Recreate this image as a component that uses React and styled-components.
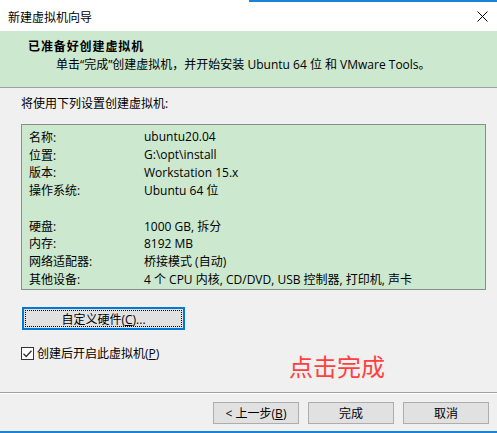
import styled, { createGlobalStyle } from 'styled-components';

const Global = createGlobalStyle`
    html, body {
        margin: 0;
        padding: 0;
        background: #f0f0f0;
    }
    body {
        font-family: "Open Sans", "Noto Sans CJK SC", sans-serif;
        font-size: 12px;
        color: #000;
    }
`;

const WINDOW = styled.div`
    position: relative;
    width: 497px;
    height: 433px;
    display: flex;
    flex-direction: column;
    background: #f0f0f0;
    overflow: hidden;
    box-sizing: border-box;
    border-bottom: 2px solid #1883d7;
`;

const TITLEBAR = styled.div`
    height: 31px;
    flex: none;
    display: flex;
    align-items: center;
    justify-content: space-between;
    padding: 2px 9px 0 8px;
    box-sizing: border-box;
    background: linear-gradient(to right, #fff 249px, #1883d7 249px) top / 100% 2px no-repeat,
        #fff;

    .title {
        font-family: "Noto Sans CJK SC", sans-serif;
        line-height: 16px;
    }
`;

const HEADER = styled.div`
    height: 57px;
    flex: none;
    box-sizing: border-box;
    background: #cce8cf;
    border-bottom: 1px solid #a0a0a0;
    padding: 8px 0 0 28px;

    .heading {
        font-weight: bold;
        line-height: 16px;
        letter-spacing: 0.9px;
    }

    .sub {
        margin: 2px 0 0 28px;
        line-height: 16px;
    }
`;

const BODY = styled.div`
    position: relative;
    flex: 1;
    padding: 0 11px 0 21px;
    border-bottom: 1px solid #a0a0a0;
    box-shadow: 0 1px 0 #fff;

    .intro {
        margin-top: 8px;
        line-height: 16px;
    }
`;

const SUMMARY = styled.div`
    margin-top: 12px;
    height: 166px;
    box-sizing: border-box;
    background: #cce8cf;
    border: 1px solid #82928a;
    padding: 3px 7px;
    display: grid;
    grid-template-columns: 115px 1fr;
    grid-auto-rows: 17.75px;
    align-items: center;
`;

const GAP = styled.div`
    grid-column: 1 / -1;
`;

const CUSTOM = styled.button`
    margin: 17px 0 0 1px;
    width: 163px;
    height: 23px;
    padding: 0;
    display: block;
    position: relative;
    font: inherit;
    background: #e1e1e1;
    border: 2px solid #0078d7;
    box-sizing: border-box;

    &::after {
        content: '';
        position: absolute;
        inset: 1px;
        border: 1px dotted #000;
    }
`;

const CHECKROW = styled.label`
    margin-top: 17px;
    display: flex;
    align-items: center;
    gap: 3px;
    height: 13px;
    line-height: 16px;
`;

const BOX = styled.span`
    width: 13px;
    height: 13px;
    box-sizing: border-box;
    border: 1px solid #333;
    background: #fff;
    display: flex;
    align-items: center;
    justify-content: center;
`;

const NOTE = styled.div`
    position: absolute;
    left: 289px;
    top: 266px;
    font-family: "Noto Sans CJK SC", sans-serif;
    font-size: 24px;
    line-height: 24px;
    color: #ff4040;
`;

const FOOTER = styled.div`
    height: 38px;
    flex: none;
    display: flex;
    justify-content: flex-end;
    gap: 9px;
    padding: 9px 8px 0 0;
    box-sizing: border-box;
`;

const BTN = styled.button`
    width: 86px;
    height: 22px;
    padding: 0;
    font: inherit;
    background: #e1e1e1;
    border: 1px solid #adadad;
    box-sizing: border-box;
`;

const rows = [
    ['名称:', 'ubuntu20.04'],
    ['位置:', 'G:\\opt\\install'],
    ['版本:', 'Workstation 15.x'],
    ['操作系统:', 'Ubuntu 64 位'],
    null,
    ['硬盘:', '1000 GB, 拆分'],
    ['内存:', '8192 MB'],
    ['网络适配器:', '桥接模式 (自动)'],
    ['其他设备:', '4 个 CPU 内核, CD/DVD, USB 控制器, 打印机, 声卡'],
];

const App = () => {
    return (
        <WINDOW>
            <Global />
            <TITLEBAR>
                <span className="title">新建虚拟机向导</span>
                <svg width="11" height="11" viewBox="0 0 11 11">
                    <path d="M0.5 0.5L10.5 10.5M10.5 0.5L0.5 10.5" stroke="#000" strokeWidth="1" />
                </svg>
            </TITLEBAR>

            <HEADER>
                <div className="heading">已准备好创建虚拟机</div>
                <div className="sub">
                    单击“完成”创建虚拟机，并开始安装 Ubuntu 64 位 和 VMware Tools。
                </div>
            </HEADER>

            <BODY>
                <div className="intro">将使用下列设置创建虚拟机:</div>
                <SUMMARY>
                    {rows.map((r, i) =>
                        r ? (
                            [<span key={i + 'l'}>{r[0]}</span>, <span key={i + 'v'}>{r[1]}</span>]
                        ) : (
                            <GAP key={i} />
                        )
                    )}
                </SUMMARY>

                <CUSTOM type="button">
                    自定义硬件(<u>C</u>)...
                </CUSTOM>

                <CHECKROW>
                    <BOX>
                        <svg width="9" height="8" viewBox="0 0 9 8">
                            <path d="M0.5 3.8L3.2 6.5L8.5 0.8" fill="none" stroke="#333" strokeWidth="1.3" />
                        </svg>
                    </BOX>
                    <span>
                        创建后开启此虚拟机(<u>P</u>)
                    </span>
                </CHECKROW>

                <NOTE>点击完成</NOTE>
            </BODY>

            <FOOTER>
                <BTN type="button">
                    &lt; 上一步(<u>B</u>)
                </BTN>
                <BTN type="button">完成</BTN>
                <BTN type="button">取消</BTN>
            </FOOTER>
        </WINDOW>
    );
};

export default App;
